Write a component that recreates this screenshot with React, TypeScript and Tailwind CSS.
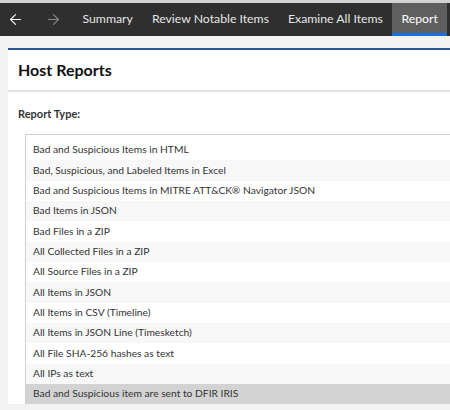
import React from 'react';
import { ArrowLeft, ArrowRight } from 'lucide-react';

const tabs = ['Summary', 'Review Notable Items', 'Examine All Items', 'Report'];

const reportTypes = [
  'Bad and Suspicious Items in HTML',
  'Bad, Suspicious, and Labeled Items in Excel',
  'Bad and Suspicious Items in MITRE ATT&CK® Navigator JSON',
  'Bad Items in JSON',
  'Bad Files in a ZIP',
  'All Collected Files in a ZIP',
  'All Source Files in a ZIP',
  'All Items in JSON',
  'All Items in CSV (Timeline)',
  'All Items in JSON Line (Timesketch)',
  'All File SHA-256 hashes as text',
  'All IPs as text',
  'Bad and Suspicious item are sent to DFIR IRIS',
];

const App: React.FC = () => {
  return (
    <div
      className="w-[450px] h-[410px] overflow-hidden bg-[#f3f3f3] text-[#333]"
      style={{ fontFamily: 'Lato, "Open Sans", sans-serif' }}
    >
      {/* top nav */}
      <div className="border-t-[3px] border-[#d2d2d2] bg-[#2f2f2f] h-[36px] flex items-stretch">
        <div className="flex items-center pl-[7px] pr-[11px] gap-[21px]">
          <ArrowLeft size={17} strokeWidth={1.6} className="text-white" />
          <ArrowRight size={17} strokeWidth={1.6} className="text-[#8a8a8a]" />
        </div>
        <div className="flex items-stretch">
          {tabs.map((t) => {
            const active = t === 'Report';
            return (
              <div
                key={t}
                className={
                  active
                    ? 'flex items-center px-[9px] text-[12.25px] text-white bg-[#5f5f5f] border-b-[3px] border-[#1a6fe0] pt-[3px] whitespace-nowrap'
                    : 'flex items-center px-[9.5px] text-[12.25px] text-[#e6e6e6] whitespace-nowrap'
                }
              >
                {t}
              </div>
            );
          })}
        </div>
      </div>

      {/* card */}
      <div className="ml-[8px] mt-[12px] w-[460px] bg-white border-t-2 border-[#2b5797]">
        <div className="h-[42px] flex items-center px-[10px] border-b-2 border-[#e4e4e4]">
          <h1 className="text-[16px] font-bold text-[#111]">Host Reports</h1>
        </div>
        <div className="px-[10px] pt-[15px]">
          <div className="text-[11px] font-bold text-[#333] leading-[14px]">Report Type:</div>
          <div className="mt-[13px] ml-[7px] border-t border-l border-[#d0d0d0] pt-[5px]">
            {reportTypes.map((r, i) => {
              const selected = i === reportTypes.length - 1;
              const bg = selected ? 'bg-[#d3d3d3]' : i % 2 === 1 ? 'bg-[#f8f8f8]' : 'bg-white';
              return (
                <div
                  key={r}
                  className={`h-[20.33px] flex items-center pl-[7px] text-[10.25px] text-[#333] whitespace-nowrap ${bg}`}
                >
                  {r}
                </div>
              );
            })}
          </div>
        </div>
      </div>
    </div>
  );
};

export default App;
